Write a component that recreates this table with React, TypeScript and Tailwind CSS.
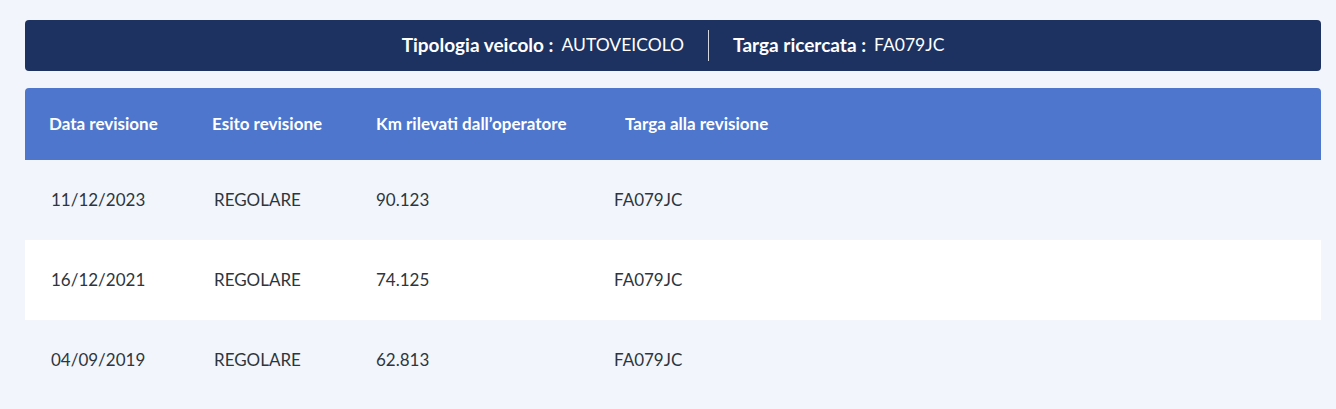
const rows = [
  { data: "11/12/2023", esito: "REGOLARE", km: "90.123", targa: "FA079JC" },
  { data: "16/12/2021", esito: "REGOLARE", km: "74.125", targa: "FA079JC" },
  { data: "04/09/2019", esito: "REGOLARE", km: "62.813", targa: "FA079JC" },
];

export default function App() {
  return (
    <div className="min-h-[409px] bg-[#f2f6fc] px-[25px] pt-5 font-['Lato','Noto_Sans',sans-serif] w-[1346px]">
      <div className="w-[1296px]">
        {/* Summary bar */}
        <div className="h-[51px] rounded bg-[#1d3261] flex items-center justify-center text-white">
          <div className="flex items-center gap-2">
            <span className="font-bold text-[19px]">Tipologia veicolo :</span>
            <span className="text-[17.5px]">AUTOVEICOLO</span>
          </div>
          <div className="w-px h-[31px] bg-white/80 mx-6" />
          <div className="flex items-center gap-2">
            <span className="font-bold text-[19px]">Targa ricercata :</span>
            <span className="text-[17.5px]">FA079JC</span>
          </div>
        </div>

        {/* Table */}
        <div className="mt-[17px]">
          <div className="h-[72px] rounded-t bg-[#4d76cc] text-white font-bold text-[17px] grid grid-cols-[163px_164px_249px_1fr] items-center pl-6">
            <span>Data revisione</span>
            <span>Esito revisione</span>
            <span>Km rilevati dall’operatore</span>
            <span>Targa alla revisione</span>
          </div>
          {rows.map((r, i) => (
            <div
              key={r.data}
              className={`h-20 grid grid-cols-[163px_162px_238px_1fr] items-center pl-[26px] text-[17px] text-[#2e353d] ${
                i === 1 ? "bg-white" : "bg-[#f2f6fc]"
              }`}
            >
              <span>{r.data}</span>
              <span>{r.esito}</span>
              <span>{r.km}</span>
              <span>{r.targa}</span>
            </div>
          ))}
        </div>
      </div>
    </div>
  );
}
